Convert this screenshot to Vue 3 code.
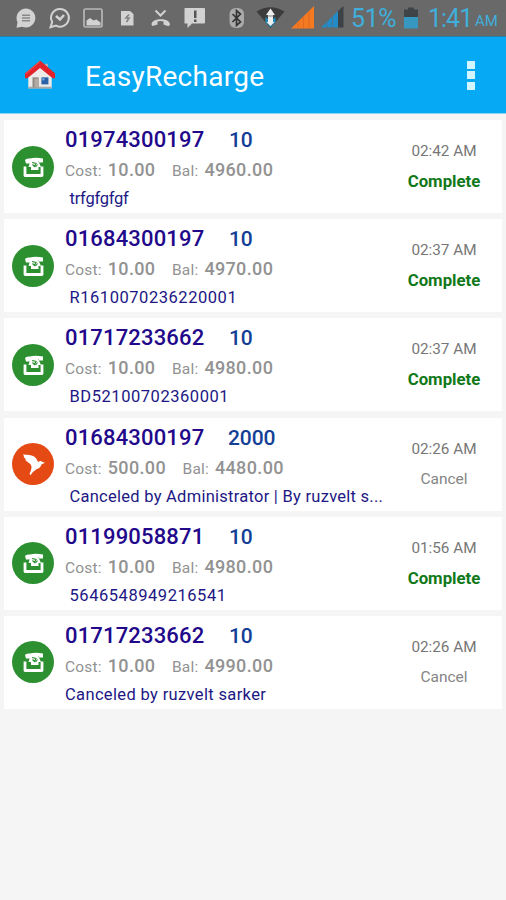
<script setup>
const rows = [
  { phone: '01974300197', amount: '10', cost: '10.00', bal: '4960.00', note: 'trfgfgfgf', time: '02:42 AM', status: 'Complete', icon: 'phone', indent: true, kind: 'narrow' },
  { phone: '01684300197', amount: '10', cost: '10.00', bal: '4970.00', note: 'R1610070236220001', time: '02:37 AM', status: 'Complete', icon: 'phone', indent: true, kind: 'code' },
  { phone: '01717233662', amount: '10', cost: '10.00', bal: '4980.00', note: 'BD52100702360001', time: '02:37 AM', status: 'Complete', icon: 'phone', indent: true, kind: 'code' },
  { phone: '01684300197', amount: '2000', cost: '500.00', bal: '4480.00', note: 'Canceled by Administrator | By ruzvelt s...', time: '02:26 AM', status: 'Cancel', icon: 'bird', indent: true, kind: 'long' },
  { phone: '01199058871', amount: '10', cost: '10.00', bal: '4980.00', note: '5646548949216541', time: '01:56 AM', status: 'Complete', icon: 'phone', indent: true, kind: 'code' },
  { phone: '01717233662', amount: '10', cost: '10.00', bal: '4990.00', note: 'Canceled by ruzvelt sarker', time: '02:26 AM', status: 'Cancel', icon: 'phone', indent: false, kind: 'text' }
]
</script>

<template>
  <div class="screen">
    <header class="status">
      <svg class="glyphs" width="346" height="36" viewBox="0 0 346 36">
        <g fill="#d2d2d2">
          <path d="M26 8.5a9.5 9.5 0 1 1-4 18.2l-5.500 1 1-5.500A9.500 9.500 0 0 1 26 8.500z" />
          <path d="M22 14.500h8v1.500h-8zM22 17.300h8v1.500h-8zM22 20h8v1.500h-8z" fill="#888" />
          <path d="M60 9a8.800 8.800 0 1 1-4 16.600l-5.500 1.700 1.700-5.200A8.800 8.800 0 0 1 60 9z" fill="none" stroke="#d2d2d2" stroke-width="2" />
          <path d="M56 16l4 3.500 4-4.500" fill="none" stroke="#d2d2d2" stroke-width="2.600" />
          <rect x="84" y="9" width="18" height="18" rx="1.500" fill="none" stroke="#b8b8b8" stroke-width="1.700" />
          <path d="M86.500 25.500v-5l3.500-2.500 3.500 2.500 3-1 4 3v3z" />
          <path d="M121 11h9l3.500 3v11.500H121z" />
          <path d="M129 14.500l-3 3.500h3l-2.500 4" fill="none" stroke="#858585" stroke-width="1.700" />
          <path d="M155.500 10.500l5 5 5-5" fill="none" stroke="#d2d2d2" stroke-width="2" />
          <path d="M151.500 24.500c0-7 18.500-7 18.500 0l-1.500 1.700-5-1.700v-3c-2-.7-4-.7-6 0v3l-5 1.500z" />
          <path d="M185 8h19q1 0 1 1v13.500q0 1-1 1h-12l-4.500 4.500v-4.500h-3V9q0-1 .5-1z" />
          <path d="M194 10.500h2.500V18H194zM194 19.500h2.500V22H194z" fill="#555" />
        </g>
        <rect x="229.500" y="8" width="14.500" height="20" rx="6" fill="#aaa" />
        <path d="M232.500 14l8 8-4 3.500v-15l4 3.500-8 8" fill="none" stroke="#343434" stroke-width="1.700" />
        <path d="M256.500 11.500q14-8.500 28 0L270.500 28z" fill="#3c3c3c" />
        <path d="M265.500 17v5l5 5.500 5-5.500v-5l-2.500 2h-5z" fill="#218bbb" />
        <path d="M270.500 8.500l4.500 6.500h-2v7h1.500l-4 4-4-4h1.500v-7h-2z" fill="#eee" />
        <path d="M267.500 16h6" stroke="#7a8c94" stroke-width="1" />
        <path d="M314 6v22.500h-23z" fill="#f47920" />
        <path d="M298 21.500v7M303.500 16v12M309 11v17" stroke="#e06a22" stroke-width="1" />
        <path d="M343.500 6v21.500H338V11z" fill="#3c4246" />
        <path d="M338 11v16.500h-17z" fill="#238bc6" />
        <path d="M327 22v6M332.500 16.500V28" stroke="#4b7791" stroke-width="1" />
      </svg>
      <span class="pct">51%</span>
      <svg class="battery" width="16" height="24" viewBox="0 0 16 24">
        <path d="M1 3.500h4V1.500h6v2h4V12H1z" fill="#3e4548" />
        <path d="M1 11h14v11.500H1z" fill="#3698c0" />
      </svg>
      <span class="clock">1:41</span><span class="ampm">AM</span>
    </header>

    <div class="bar">
      <svg class="home" width="30" height="30" viewBox="0 0 32 32">
        <path d="M21 4h3.500v7H21z" fill="#a9b2b8" />
        <path d="M3.500 16L16 5l12.500 11v14h-25z" fill="#ecebea" />
        <path d="M3.500 28.500h25v2h-25z" fill="#a9a9aa" />
        <path d="M8 18.500h6.500v10.800H8z" fill="#8f8780" />
        <path d="M10 20h4.500v9.300H10z" fill="#b2aaa3" />
        <path d="M17.500 18.500h7.500v7.500h-7.500z" fill="#2a63a8" />
        <path d="M18.500 19.500h2.200v2.200h-2.200z" fill="#80a9db" />
        <path d="M16 .5L0 14v5.500h2.500L16 8.500l13.500 11H32V14z" fill="#e3222b" />
        <path d="M16 1.500L1 14.500" stroke="#f4635f" stroke-width="1" />
      </svg>
      <h1>EasyRecharge</h1>
      <div class="more"><i></i><i></i><i></i></div>
    </div>

    <main class="list">
      <article v-for="(r, i) in rows" :key="i" class="card">
        <svg class="avatar" width="42" height="42" viewBox="0 0 42 42">
          <template v-if="r.icon === 'phone'">
            <circle cx="21" cy="21" r="21" fill="#2c8f30" />
            <path d="M13 20.500v9h17v-9" fill="none" stroke="#fff" stroke-width="2.800" stroke-linejoin="round" />
            <path d="M13 14q1-2 5-1.500 5-1.500 13 0v4h-4v-1.300h-8v2.300h-5z" fill="#fff" />
            <path d="M18.500 14.500l-2 6.500h2.500v3h7.500v-3H29l-3-6.500z" fill="#fff" />
            <path d="M20 16.500l4 1-1.500 3-2-2M23.500 21l2-2.500" fill="none" stroke="#2c8f30" stroke-width="1.200" />
          </template>
          <template v-else>
            <circle cx="21" cy="21" r="21" fill="#e54914" />
            <path d="M11 11.500q7.500 0 11.500 2.200 2.500 2 3.500 5.300 3-1.800 4.500 0l2.500.8-3.500 1.700q-1 3.500-5 4.700-3.500 2-6 6l-1-1.800q1.800-3 2-6 .3-3-4-5.400l-2.500-2.200 1-.6-2.500-2.200.7-.5z" fill="#fff" />
          </template>
        </svg>
        <div class="info">
          <div class="top"><span class="number">{{ r.phone }}</span><span class="amount" :class="{ large: r.amount.length > 2 }">{{ r.amount }}</span></div>
          <div class="money">
            <span class="label">Cost:</span><b>{{ r.cost }}</b>
            <span class="label bal">Bal:</span><b>{{ r.bal }}</b>
          </div>
          <div class="note" :class="[r.kind, { indent: r.indent }]">{{ r.note }}</div>
        </div>
        <div class="side">
          <div class="time">{{ r.time }}</div>
          <div class="state" :class="{ done: r.status === 'Complete' }">{{ r.status }}</div>
        </div>
      </article>
    </main>
  </div>
</template>

<style>
body { background: #f5f5f5; }
</style>

<style scoped>
.screen { width: 506px; height: 900px; overflow: hidden; background: #f5f5f5; font-family: Roboto, "Liberation Sans", sans-serif; }
.status { height: 36px; display: flex; align-items: center; background: #696969; color: #40afdc; white-space: nowrap; border-bottom: 1px solid #287fae; }
.glyphs { flex: none; }
.pct { width: 57px; padding: 2px 0 0 5px; box-sizing: border-box; font-size: 25px; line-height: 34px; letter-spacing: -0.4px; }
.battery { flex: none; }
.clock { width: 47px; margin-left: 9px; padding-top: 2px; font-size: 25px; line-height: 34px; letter-spacing: -1px; }
.ampm { padding-top: 7px; font-size: 15px; line-height: 29px; }
.bar { height: 77px; display: flex; align-items: center; background: #05a9f4; border-bottom: 1px solid #8fd5f5; box-sizing: border-box; }
.home { margin-left: 25px; }
h1 { margin: 4px 0 0 30px; color: #fff; font-size: 28px; line-height: 36px; font-weight: 400; letter-spacing: 0.27px; }
.more { margin-left: auto; margin-right: 31px; display: flex; flex-direction: column; gap: 2.500px; }
.more i { width: 8px; height: 8px; background: #d3f5ff; }
.list { padding: 6px 4px 0; display: flex; flex-direction: column; gap: 6.200px; }
.card { height: 93px; display: flex; background: #fff; }
.avatar { flex: none; margin: 25.500px 0 0 8px; }
.info { width: 325px; margin-left: 11px; padding-top: 5px; white-space: nowrap; }
.top { height: 30px; display: flex; font-size: 22px; line-height: 30px; font-weight: 500; }
.number { width: 164px; color: #22088a; letter-spacing: 0.160px; }
.amount { color: #134096; font-size: 21px; letter-spacing: -0.1px; }
.amount.large { margin-left: -1px; }
.money { height: 30px; display: flex; align-items: baseline; line-height: 30px; color: #929292; font-size: 18px; }
.money b { margin-left: 6px; font-weight: 500; letter-spacing: 0.350px; }
.label { font-size: 15.500px; letter-spacing: 0.2px; }
.bal { margin-left: 16.500px; }
.note { height: 28px; line-height: 28px; color: #211784; font-size: 16.500px; letter-spacing: 0.35px; }
.note.code { letter-spacing: 0.54px; }
.note.long { letter-spacing: 0.26px; }
.note.narrow { letter-spacing: -0.25px; }
.indent { padding-left: 4.500px; }
.side { width: 96px; margin-left: 6px; padding-top: 17px; text-align: center; white-space: nowrap; }
.time { height: 28px; line-height: 29px; font-size: 15.300px; color: #777; }
.state { height: 32px; line-height: 32px; font-size: 15.500px; color: #858585; }
.done { color: #11791a; font-size: 16.800px; font-weight: 700; }
</style>
